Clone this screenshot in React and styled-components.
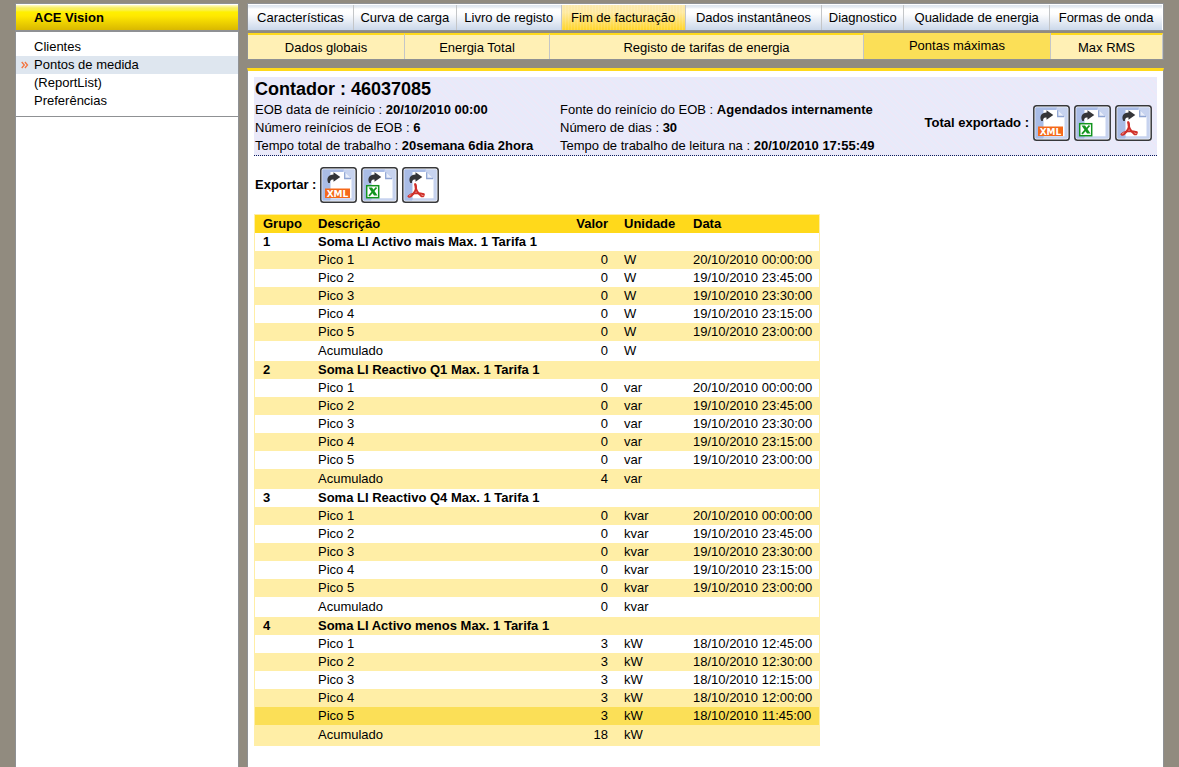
import React from 'react'
import styled, { createGlobalStyle, css } from 'styled-components'

const theme = {
    frame: '#918b7f',
    line: '#8f9194',
    yellow: '#ffd91b',
    yellowSelected: '#fbdf57',
    yellowLight: '#fff0b5',
    yellowRow: '#ffeea6',
    blueLight: '#e8eafa',
    greyBorder: '#c4c6c8',
    menuSelected: '#dee6ef',
}

const GlobalStyle = createGlobalStyle`
    * {
        box-sizing: border-box;
    }

    body {
        margin: 0;
        background: ${theme.frame};
        color: #000;
        font-family: "Liberation Sans", Arial, sans-serif;
        font-size: 13px;
        line-height: 18px;
    }

    a {
        color: inherit;
        text-decoration: none;
    }
`

const Page = styled.div`
    display: grid;
    grid-template-columns: 224px 1fr;
    gap: 8px;
    min-height: 100vh;
    padding: 3px 15px 0;
`

const Sidebar = styled.aside`
    background: #fff;
    border: 1px solid ${theme.line};
    border-bottom: 0;
`

const Brand = styled.h1`
    margin: 0;
    padding: 0 18px;
    height: 28px;
    font-size: 13px;
    line-height: 25px;
    border-top: 1px solid #fff;
    border-bottom: 2px solid ${theme.line};
    background: linear-gradient(#fffbc8 0, #f8ee60 3px, #f9f04e 5px, #fff000 7px, #ffe800 11px, #d9b800 100%);
`

const Menu = styled.ul`
    margin: 0;
    padding: 6px 0;
    list-style: none;
    border-bottom: 1px solid ${theme.line};
`

const MenuItem = styled.li`
    display: flex;
    align-items: center;
    height: 18px;
    padding-left: 5px;
    background: ${props => (props.$selected ? theme.menuSelected : 'transparent')};

    svg {
        visibility: ${props => (props.$selected ? 'visible' : 'hidden')};
    }

    a {
        margin-left: 5px;
    }
`

const Main = styled.main`
    display: flex;
    flex-direction: column;
    min-width: 0;
`

const TabBar = styled.nav`
    display: grid;
    grid-template-columns: 106fr 103fr 105fr 124fr 137fr 82fr 146fr 113fr;
    height: 28px;
    padding-top: 1px;
    background: #fff;
    border: 1px solid ${theme.line};
`

const tabLayout = css`
    display: flex;
    align-items: center;
    justify-content: center;
    min-width: 0;
    white-space: nowrap;
`

const Tab = styled.a`
    ${tabLayout}
    border-right: 1px solid ${theme.greyBorder};
    background: linear-gradient(#dde5ee 0, #e6ebf2 2px, #fff 4px, #fdfdfe 9px, #cbd8ea 100%);

    &:last-child {
        border-right-color: #fff;
    }

    ${props => props.$selected && css`
        background:
            repeating-linear-gradient(90deg, rgba(255, 255, 255, 0.12) 0 1px, transparent 1px 3px),
            linear-gradient(#fbe9ae 0, #ffeaa0 30%, #ffd52c 100%);
    `}
`

const SubTabBar = styled.nav`
    display: grid;
    grid-template-columns: 157fr 145fr 314fr 187fr 112fr;
    height: 27px;
    margin-top: 2px;
    border: 1px solid ${theme.line};
    border-top: 0;
`

const SubTab = styled.a`
    ${tabLayout}
    padding-top: 1px;
    border-top: 2px solid ${theme.yellow};
    border-right: 1px solid ${theme.greyBorder};
    background: ${theme.yellowLight};

    ${props => props.$selected && css`
        padding-top: 0;
        border-top: 0;
        background: ${theme.yellowSelected};
    `}
`

const Content = styled.section`
    flex: 1;
    margin-top: 8px;
    padding: 6px;
    background: #fff;
    border: 1px solid ${theme.line};
    border-top: 3px solid ${theme.yellow};
    border-bottom: 0;
`

const Summary = styled.header`
    display: flex;
    align-items: flex-end;
    justify-content: space-between;
    padding: 1px 5px 0 1px;
    border-bottom: 1px dotted #0a1a5c;
    background:
        repeating-linear-gradient(45deg, rgba(255, 225, 240, 0.25) 0 1px, transparent 1px 4px),
        ${theme.blueLight};
`

const Facts = styled.div`
    display: grid;
    grid-template-columns: 305px auto;
    white-space: nowrap;
`

const Title = styled.h2`
    grid-column: 1 / -1;
    margin: 0;
    font-size: 18px;
    line-height: 23px;
`

const ExportGroup = styled.div`
    display: flex;
    align-items: center;
    gap: 4px;
    font-weight: bold;
    white-space: nowrap;
`

const TotalExport = styled.div`
    padding-bottom: 14px;
`

const ExportRow = styled.div`
    padding: 11px 1px;
`

const ExportButton = styled.button`
    display: block;
    width: 37px;
    height: 36px;
    padding: 0;
    border: 0;
    background: none;
    cursor: pointer;

    svg {
        display: block;
    }
`

const Table = styled.table`
    border-collapse: separate;
    border-spacing: 0;
    border: 1px solid ${theme.yellowRow};
    table-layout: fixed;
    width: 566px;
`

const Col = styled.col`
    width: ${props => props.$width}px;
`

const Cell = styled.td`
    height: 18px;
    padding: 0 8px;
    text-align: ${props => (props.$right ? 'right' : 'left')};
    white-space: nowrap;
`

const HeadRow = styled.tr`
    background: ${theme.yellow};
`

const Row = styled.tr`
    background: ${props => (props.$striped ? theme.yellowRow : '#fff')};
    font-weight: ${props => (props.$title ? 'bold' : 'normal')};

    ${props => props.$selected && css`
        background: ${theme.yellowSelected};
    `}

    ${props => props.$total && css`
        ${Cell} {
            height: 20px;
        }
    `}
`

const tabs = [
    'Características', 'Curva de carga', 'Livro de registo', 'Fim de facturação',
    'Dados instantâneos', 'Diagnostico', 'Qualidade de energia', 'Formas de onda',
]

const subTabs = ['Dados globais', 'Energia Total', 'Registo de tarifas de energia', 'Pontas máximas', 'Max RMS']

const menu = ['Clientes', 'Pontos de medida', '(ReportList)', 'Preferências']

const facts = [
    ['EOB data de reinício', '20/10/2010 00:00'],
    ['Fonte do reinício do EOB', 'Agendados internamente'],
    ['Número reinícios de EOB', '6'],
    ['Número de dias', '30'],
    ['Tempo total de trabalho', '20semana 6dia 2hora'],
    ['Tempo de trabalho de leitura na', '20/10/2010 17:55:49'],
]

const quarterHours = [
    '20/10/2010 00:00:00', '19/10/2010 23:45:00', '19/10/2010 23:30:00',
    '19/10/2010 23:15:00', '19/10/2010 23:00:00',
]

const groups = [
    { name: 'Soma LI Activo mais Max. 1 Tarifa 1', unit: 'W', value: 0, total: 0, dates: quarterHours },
    { name: 'Soma LI Reactivo Q1 Max. 1 Tarifa 1', unit: 'var', value: 0, total: 4, dates: quarterHours },
    { name: 'Soma LI Reactivo Q4 Max. 1 Tarifa 1', unit: 'kvar', value: 0, total: 0, dates: quarterHours },
    {
        name: 'Soma LI Activo menos Max. 1 Tarifa 1',
        unit: 'kW',
        value: 3,
        total: 18,
        dates: [
            '18/10/2010 12:45:00', '18/10/2010 12:30:00', '18/10/2010 12:15:00',
            '18/10/2010 12:00:00', '18/10/2010 11:45:00',
        ],
    },
]

const Chevrons = () => (
    <svg width="8" height="8" viewBox="0 0 8 8" fill="none" stroke="#f4743f" strokeWidth="1.3" aria-hidden="true">
        <path d="M0.7 1 L3.3 4 L0.7 7 M3.9 1 L6.5 4 L3.9 7" />
    </svg>
)

const MarkText = styled.text`
    font-family: "DejaVu Sans", sans-serif;
    font-size: 9px;
    font-weight: bold;
    fill: #fff;
    text-anchor: middle;
`

const XmlMark = () => (
    <g>
        <rect x="5" y="21.5" width="25" height="9.5" fill="#f5691a" />
        <MarkText x="17.5" y="29.5">XML</MarkText>
    </g>
)

const ExcelMark = () => (
    <g>
        <rect x="5.7" y="18.7" width="12" height="12" fill="#fff" stroke="#12951f" strokeWidth="1.5" />
        <path d="M7.5 20.5 H11 L16.5 28.5 H13 Z" fill="#12951f" />
        <path d="M15.5 20.5 L8 28.8" fill="none" stroke="#12951f" strokeWidth="1.8" />
    </g>
)

const PdfMark = () => (
    <g fill="none" strokeLinecap="round" strokeLinejoin="round">
        <path d="M13.2 17.2 C14.8 20 14 23 12 25.8 C10 28.6 8.3 30 6.8 29.6" stroke="#cf2f2a" strokeWidth="2" />
        <path d="M13.4 17.4 C13.2 21.5 15.5 26 19.5 29.2" stroke="#cf2f2a" strokeWidth="2" />
        <path d="M6.5 29.3 C8.5 26.5 15 25 21.8 27.2" stroke="#cf2f2a" strokeWidth="2" />
        <path d="M19.5 29.2 C21 30.2 22.6 29.3 21.8 27.4 Z" fill="#cf2f2a" stroke="#cf2f2a" strokeWidth="1.2" />
        <path d="M7.2 29 L9 27.6 M20 28.3 L21.2 28.6" stroke="#f2a39b" strokeWidth="0.9" />
    </g>
)

const marks = { XML: XmlMark, Excel: ExcelMark, PDF: PdfMark }

const ExportIcon = ({ type }) => {
    const Mark = marks[type]

    return (
        <svg width="37" height="36" viewBox="0 0 37 36" aria-hidden="true">
            <rect x="0.8" y="0.8" width="35.4" height="34.4" rx="2.8" fill="#fff" stroke="#37383b" strokeWidth="1.5" />
            <rect x="2.2" y="2.2" width="32.6" height="31.6" rx="1" fill="#c7d3ef" />
            <path d="M2.5 2.5 H24 L10 33.5 H2.5 Z" fill="#a9bce6" />
            <path d="M10.5 5 H24 L31.5 12 V31.3 H10.5 Z" fill="#fff" />
            <path d="M24.7 5.3 V11.5 H31" fill="#e9eefa" stroke="#8fa5d3" strokeWidth="1.3" />
            <path
                d="M8.3 16 C6 11.5 8.5 7.6 13.5 7.6 V5.2 L20.3 10 L13.5 14.8 V12.5 C11 12.2 9.8 13.4 9.9 16 Z"
                fill="#343538"
            />
            <Mark />
        </svg>
    )
}

const Export = ({ label }) => (
    <ExportGroup>
        <span>{label} :</span>
        {Object.keys(marks).map(type => (
            <ExportButton key={type} type="button" aria-label={`${label} ${type}`}>
                <ExportIcon type={type} />
            </ExportButton>
        ))}
    </ExportGroup>
)

const GroupRows = ({ group, index }) => {
    // every group has seven rows, so the stripes swap from one group to the next
    const striped = row => (index * 7 + row) % 2 === 1

    return (
        <tbody>
            <Row $title $striped={striped(0)}>
                <Cell>{index + 1}</Cell>
                <Cell colSpan={4}>{group.name}</Cell>
            </Row>
            {group.dates.map((date, i) => (
                <Row key={date} $striped={striped(i + 1)} $selected={date === '18/10/2010 11:45:00'}>
                    <Cell />
                    <Cell>Pico {i + 1}</Cell>
                    <Cell $right>{group.value}</Cell>
                    <Cell>{group.unit}</Cell>
                    <Cell>{date}</Cell>
                </Row>
            ))}
            <Row $total $striped={striped(6)}>
                <Cell />
                <Cell>Acumulado</Cell>
                <Cell $right>{group.total}</Cell>
                <Cell>{group.unit}</Cell>
                <Cell />
            </Row>
        </tbody>
    )
}

const App = () => (
    <Page>
        <GlobalStyle />
        <Sidebar>
            <Brand>ACE Vision</Brand>
            <Menu>
                {menu.map(item => (
                    <MenuItem key={item} $selected={item === 'Pontos de medida'}>
                        <Chevrons />
                        <a href="#">{item}</a>
                    </MenuItem>
                ))}
            </Menu>
        </Sidebar>

        <Main>
            <TabBar>
                {tabs.map(tab => (
                    <Tab key={tab} href="#" $selected={tab === 'Fim de facturação'}>{tab}</Tab>
                ))}
            </TabBar>
            <SubTabBar>
                {subTabs.map(tab => (
                    <SubTab key={tab} href="#" $selected={tab === 'Pontas máximas'}>{tab}</SubTab>
                ))}
            </SubTabBar>

            <Content>
                <Summary>
                    <Facts>
                        <Title>Contador : 46037085</Title>
                        {facts.map(([label, value]) => (
                            <div key={label}>{label} : <b>{value}</b></div>
                        ))}
                    </Facts>
                    <TotalExport>
                        <Export label="Total exportado" />
                    </TotalExport>
                </Summary>

                <ExportRow>
                    <Export label="Exportar" />
                </ExportRow>

                <Table>
                    <colgroup>
                        {[55, 256, 50, 69, 134].map(width => <Col key={width} $width={width} />)}
                    </colgroup>
                    <thead>
                        <HeadRow>
                            <Cell as="th">Grupo</Cell>
                            <Cell as="th">Descrição</Cell>
                            <Cell as="th" $right>Valor</Cell>
                            <Cell as="th">Unidade</Cell>
                            <Cell as="th">Data</Cell>
                        </HeadRow>
                    </thead>
                    {groups.map((group, i) => (
                        <GroupRows key={group.name} group={group} index={i} />
                    ))}
                </Table>
            </Content>
        </Main>
    </Page>
)

export default App
